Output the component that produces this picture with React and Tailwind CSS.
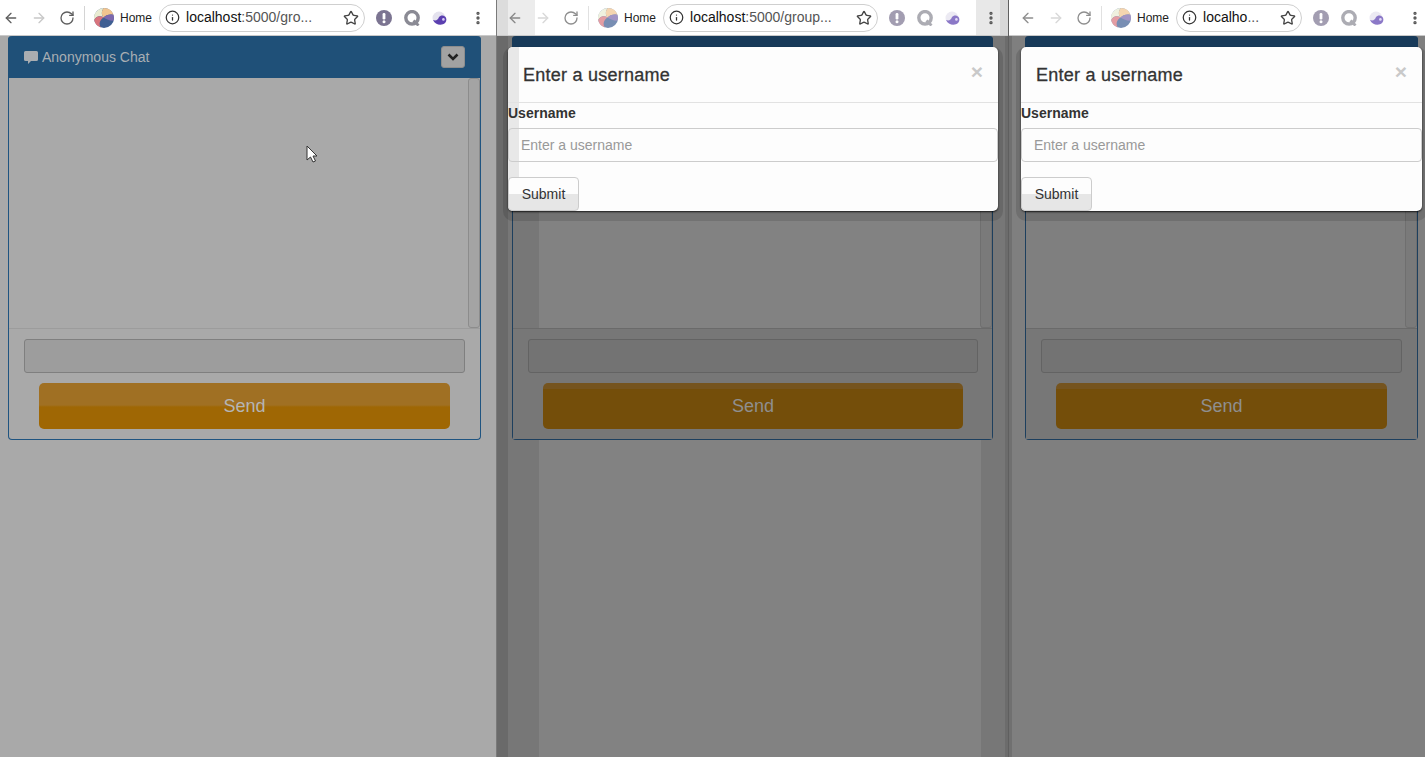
import React from 'react';
import { ArrowLeft, ArrowRight, RotateCw, Info, Star, EllipsisVertical } from 'lucide-react';

const font = { fontFamily: '"Liberation Sans", Arial, sans-serif' };

// Swirl logo in the browser toolbar
const SwirlLogo = () => (
    <svg width="20" height="20" viewBox="0 0 20 20" className="shrink-0">
        <circle cx="10" cy="10" r="10" fill="#3f5f93" />
        <path d="M10 0A10 10 0 0 0 .2 12C2 8 6 7 9.500 9.500 7 6.500 7.500 2.500 10 0z" fill="#e9ecd2" />
        <path d="M10 0C7.500 2.500 7 6.500 9.500 9.500 12 7 16 6 19.500 7A10 10 0 0 0 10 0z" fill="#f1c48f" />
        <path d="M19.500 7C16 6 12 7 9.500 9.500 13 12 17 13 19.600 12.500A10 10 0 0 0 19.500 7z" fill="#7c68ad" />
        <path d="M.2 12A10 10 0 0 0 7 19.500C4.500 16.500 5.500 12 9.500 9.500 6 7 2 8 .2 12z" fill="#d9747d" />
    </svg>
);

const AlertDot = () => (
    <svg width="16" height="16" viewBox="0 0 16 16" className="shrink-0">
        <circle cx="8" cy="8" r="8" fill="#7b7491" />
        <rect x="6.600" y="3" width="2.800" height="6.400" rx="1.200" fill="#fff" />
        <circle cx="8" cy="11.800" r="1.500" fill="#fff" />
    </svg>
);

const QMark = () => (
    <svg width="16" height="16" viewBox="0 0 16 16" fill="none" className="shrink-0">
        <circle cx="8" cy="7.800" r="6.200" stroke="#8a8a94" strokeWidth="3.400" />
        <path d="M9.500 10.500 14.500 15.500" stroke="#8a8a94" strokeWidth="2.800" />
    </svg>
);

const Orb = () => (
    <svg width="16" height="16" viewBox="0 0 16 16" className="shrink-0">
        <circle cx="7" cy="8" r="6.500" fill="#e4e2ee" />
        <path d="M1 10c3 1 5 0 6-3 1-1 3-2 5-1 3 1 3 5 1 7-3 3-10 2-12-3z" fill="#5b3fb0" />
        <circle cx="11.400" cy="9.400" r="1.300" fill="#d8cdf5" />
    </svg>
);

const Toolbar = ({ url, pl, pr, dim, ghost }) => {
    const faded = dim ? 'opacity-70' : '';
    return (
        <div className={`h-[36px] shrink-0 flex items-center border-b border-[#c9c9c9] ${ghost || 'bg-white'} ${pl} ${pr}`}>
            <div className={`flex items-center gap-3 shrink-0 ${faded}`}>
                <ArrowLeft size={16} className="text-[#5f5f5f]" />
                <ArrowRight size={16} className="text-[#c8c8c8]" />
                <RotateCw size={16} className="text-[#5f5f5f]" />
            </div>
            <div className={`w-px h-6 bg-[#d4d4d4] ml-[9px] mr-[9px] shrink-0 ${faded}`} />
            <div className={`shrink-0 flex ${faded}`}>
                <SwirlLogo />
            </div>
            <span className="ml-[6px] text-[12px] text-[#222] shrink-0">Home</span>
            <div className="ml-[7px] h-[28px] flex-1 min-w-0 flex items-center rounded-full border border-[#cfcfcf] pl-[5px] pr-[5px]">
                <Info size={15} className="text-[#333] shrink-0" />
                <span className="ml-[6px] flex-1 min-w-0 text-[14px] text-[#555] whitespace-nowrap overflow-hidden">
                    <span className="text-[#111]">{url[0]}</span>{url[1]}
                </span>
                <Star size={16} className="text-[#444] shrink-0" />
            </div>
            <div className={`ml-[11px] flex items-center gap-3 shrink-0 ${faded}`}>
                <AlertDot />
                <QMark />
                <Orb />
            </div>
            <EllipsisVertical size={16} strokeWidth={3} className="ml-[22px] text-[#555] shrink-0" />
        </div>
    );
};

const ChatPanel = ({ dark, cursor, footerPr = 'pr-[15px]' }) => {
    const border = dark ? 'border-[#1d3f5e]' : 'border-[#1f5480]';
    return (
        <div className={`relative rounded-[4px] border-x border-b ${border}`}>
            <div className={`-mx-px h-[42px] rounded-t-[4px] flex items-center justify-between pl-[16px] pr-[16px] ${dark ? 'bg-[#183a59]' : 'bg-[#1f5078]'}`}>
                {!dark && (
                    <>
                        <div className="flex items-center gap-[4px] text-[14px] text-[#a8aeb3]">
                            <svg width="14" height="13" viewBox="0 0 14 13" className="shrink-0">
                                <path d="M1.500 0h11A1.500 1.500 0 0 1 14 1.500v7a1.500 1.500 0 0 1-1.500 1.500H7l-3 3v-3H1.500A1.500 1.500 0 0 1 0 8.500v-7A1.500 1.500 0 0 1 1.500 0z" fill="#a9adb1" />
                            </svg>
                            Anonymous Chat
                        </div>
                        <div className="w-[24px] h-[22px] rounded-[3px] bg-[#a2a2a2] border border-[#8d8d8d] flex items-center justify-center">
                            <svg width="12" height="8" viewBox="0 0 12 8" fill="none">
                                <path d="M1.500 1.500 6 6l4.500-4.500" stroke="#222" strokeWidth="2.600" />
                            </svg>
                        </div>
                    </>
                )}
            </div>
            <div className="h-[250px] flex justify-end">
                <div className={`w-[12px] h-[250px] rounded-[3px] border ${dark ? 'border-[#6f6f6f] bg-[#7a7a7a]' : 'border-[#8c8c8c] bg-[#a4a4a4]'}`} />
            </div>
            <div className={`border-t pt-[10px] pb-[10px] pl-[15px] ${footerPr} ${dark ? 'border-[#6a6a6a] bg-[#777777]' : 'border-[#9c9c9c]'}`}>
                <div className={`h-[34px] rounded-[3px] border ${dark ? 'border-[#636363] bg-[#737373]' : 'border-[#7f7f7f] bg-[#9d9d9d]'}`} />
                <div className="mt-[10px] px-[15px]">
                    <div className={`h-[46px] rounded-[5px] flex items-center justify-center text-[18px] ${dark ? 'bg-[linear-gradient(#75541f_0,#75541f_6px,#744e0a_6px)] text-[#8f8f8f]' : 'bg-[linear-gradient(#a07023_0,#a07023_22px,#9f6704_24px)] text-[#b5b5b5]'}`}>
                        Send
                    </div>
                </div>
            </div>
            {cursor && (
                <svg width="12" height="18" viewBox="0 0 12 18" className="absolute left-[297px] top-[109px]">
                    <path d="M1 1v14l3.500-3 2.500 5 2.500-1-2.500-5H11z" fill="#fff" stroke="#333" strokeWidth="1" />
                </svg>
            )}
        </div>
    );
};

const UsernameModal = ({ className, ghost }) => (
    <div className={`absolute top-[47px] h-[164px] bg-[#fdfdfd] rounded-[5px] shadow-[0_1px_2px_rgba(0,0,0,0.8),0_5px_0_5px_rgba(0,0,0,0.12)] ${className}`}>
        {/* leftover frame of the animation */}
        {ghost && <div className="absolute left-0 top-0 w-[11px] h-[146px] bg-[#e8e8e8] rounded-tl-[5px] rounded-bl-[12px]" />}
        <div className="relative">
            <div className="h-[56px] border-b border-[#e2e2e2] flex justify-between pl-[15px] pr-[15px]">
                <span className="mt-[17px] text-[18px] leading-[22px] text-[#333] tracking-[0.25px] [-webkit-text-stroke:0.3px_#333]">Enter a username</span>
                <span className="mt-[14px] text-[21px] leading-[21px] font-bold text-[#c9c9c9]">×</span>
            </div>
            <div className="text-[14px] leading-[20px] font-bold text-[#333]">Username</div>
            <div className="mt-[5px] h-[34px] rounded-[4px] border border-[#cccccc] flex items-center pl-[12px] text-[14px] text-[#999]">
                Enter a username
            </div>
            <div className="mt-[15px] w-[71px] h-[34px] rounded-[4px] border border-[#cccccc] bg-[linear-gradient(#fdfdfd_0,#fdfdfd_16px,#e6e6e6_16px)] flex items-center justify-center text-[14px] text-[#333]">
                Submit
            </div>
        </div>
    </div>
);

export default function App() {
    return (
        <div className="relative h-screen overflow-hidden flex" style={font}>
            {/* left window, before the dialog opens */}
            <div className="w-[496px] shrink-0 flex flex-col bg-[#a9a9a9]">
                <Toolbar url={['localhost', ':5000/gro...']} pl="pl-[3px]" pr="pr-[10px]" />
                <div className="pl-[8px] pr-[15px]">
                    <ChatPanel cursor />
                </div>
            </div>
            <div className="w-px bg-[#7a7a7a] shrink-0" />

            {/* middle window */}
            <div className="w-[511px] shrink-0 flex flex-col bg-[linear-gradient(90deg,#6a6a6a_0,#6a6a6a_11px,#777777_11px,#777777_42px,#828282_42px,#828282_484px,#777777_484px,#777777_508px,#6c6c6c_508px)]">
                <Toolbar
                    url={['localhost', ':5000/group...']}
                    pl="pl-[10px]"
                    pr="pr-[9px]"
                    dim
                    ghost="bg-[linear-gradient(90deg,#dcdcdc_0,#dcdcdc_11px,#ececec_11px,#ececec_38px,#ffffff_38px,#ffffff_479px,#e8e8e8_479px,#e8e8e8_503px,#d8d8d8_503px)]"
                />
                <div className="pl-[15px] pr-[15px]">
                    <ChatPanel dark footerPr="pr-[14px]" />
                </div>
            </div>
            <div className="w-px bg-[#5f5f5f] shrink-0" />

            {/* right window */}
            <div className="flex-1 min-w-0 flex flex-col bg-[linear-gradient(90deg,#707070_0,#707070_3px,#7f7f7f_3px)]">
                <Toolbar url={['localho', '...']} pl="pl-[11px]" pr="pr-[2px]" dim />
                <div className="pl-[16px] pr-[7px]">
                    <ChatPanel dark />
                </div>
            </div>

            <UsernameModal className="left-[508px] w-[490px]" ghost />
            <UsernameModal className="left-[1021px] w-[401px]" />
        </div>
    );
}
